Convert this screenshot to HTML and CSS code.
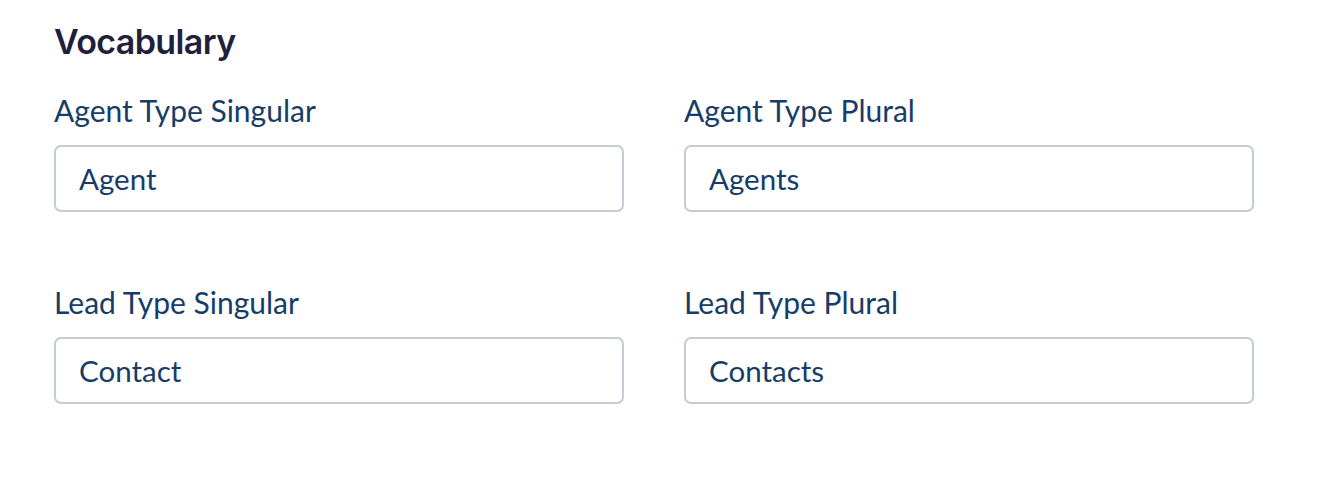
FILE: index.html
```html
<!DOCTYPE html>
<html lang="en">
<head>
    <meta charset="UTF-8">
    <title>Vocabulary</title>
    <link rel="stylesheet" href="styles.css">
</head>
<body>
    <section class="vocab">
        <h2 class="vocab-title">Vocabulary</h2>
        <div class="vocab-grid">
            <div class="field">
                <label class="field-label" for="agentSingular">Agent Type Singular</label>
                <input class="field-input" type="text" id="agentSingular" value="Agent" />
            </div>
            <div class="field">
                <label class="field-label" for="agentPlural">Agent Type Plural</label>
                <input class="field-input" type="text" id="agentPlural" value="Agents" />
            </div>
            <div class="field">
                <label class="field-label" for="leadSingular">Lead Type Singular</label>
                <input class="field-input" type="text" id="leadSingular" value="Contact" />
            </div>
            <div class="field">
                <label class="field-label" for="leadPlural">Lead Type Plural</label>
                <input class="field-input" type="text" id="leadPlural" value="Contacts" />
            </div>
        </div>
    </section>
</body>
</html>
```

FILE: styles.css
```css
body {
    margin: 0;
    background: #fff;
    font-family: Lato, "Open Sans", sans-serif;
}
.vocab {
    padding: 20px 0 0 54px;
}
.vocab-title {
    margin: 0;
    font-family: Inter, sans-serif;
    font-size: 34px;
    font-weight: 600;
    letter-spacing: -0.6px;
    color: #211f3d;
    line-height: 44px;
}
.vocab-grid {
    display: grid;
    grid-template-columns: 570px 570px;
    column-gap: 60px;
    row-gap: 72px;
    margin-top: 28px;
}
.field {
    display: flex;
    flex-direction: column;
}
.field-label {
    font-size: 30px;
    color: #163d68;
    line-height: 36px;
    margin-bottom: 17px;
}
.field-input {
    box-sizing: border-box;
    width: 570px;
    height: 67px;
    padding: 0 23px;
    border: 2px solid #c4ccd5;
    border-radius: 7px;
    font-family: Lato, "Open Sans", sans-serif;
    font-size: 29.5px;
    color: #163d68;
    background: #fff;
    outline: none;
}
```
